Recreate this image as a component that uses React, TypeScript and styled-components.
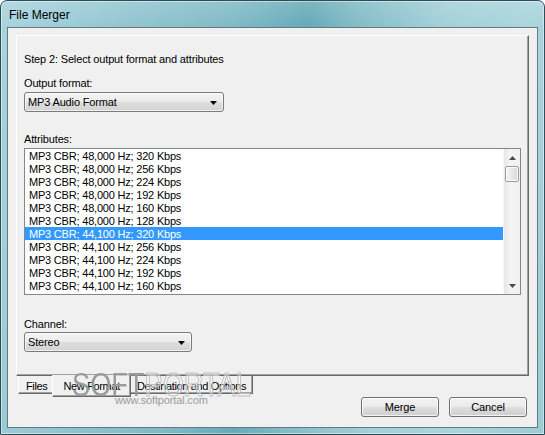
import React from "react";
import styled, { createGlobalStyle } from "styled-components";

const GlobalStyle = createGlobalStyle`
  html, body { margin: 0; padding: 0; background: #ffffff; }
  body { font-family: "Liberation Sans", Arial, sans-serif; font-size: 11px; color: #000; letter-spacing: -0.15px; }
  * { box-sizing: border-box; }
`;

const Window = styled.div`
  position: relative;
  width: 545px;
  height: 435px;
  border: 1px solid #2e4e57;
  border-radius: 7px 7px 0 0;
  overflow: hidden;
  display: flex;
  flex-direction: column;
  background:
    linear-gradient(to bottom, rgba(255, 255, 255, 0.14), rgba(255, 255, 255, 0) 26px),
    linear-gradient(100deg, #a8d4de 0%, #93c6d1 20%, #80bac6 38%, #66aab8 50%, #83bcc7 58%, #a3d0d9 72%, #aad5dc 86%, #9ccbd3 100%);
  box-shadow: inset 0 0 0 1px rgba(255, 255, 255, 0.45);
`;

const TitleBar = styled.div`
  height: 26px;
  flex: none;
  display: flex;
  align-items: center;
  padding: 1px 0 0 8px;
  font-size: 12px;
  letter-spacing: 0;
  color: #000;
`;

const Client = styled.div`
  flex: 1;
  margin: 0 6px 6px 6px;
  border: 1px solid rgba(40, 70, 80, 0.7);
  background: #f0f0f0;
  display: flex;
  flex-direction: column;
  padding: 7px 8px 10px 8px;
`;

const Panel = styled.div`
  height: 341px;
  flex: none;
  border-top: 1px solid #ffffff;
  border-left: 1px solid #ffffff;
  border-right: 1px solid #696969;
  border-bottom: 1px solid #696969;
  box-shadow: inset -1px -1px 0 #a0a0a0;
  display: flex;
  flex-direction: column;
  align-items: flex-start;
  padding: 16px 0 0 7px;
`;

const Text = styled.div<{ $top?: number }>`
  line-height: 15px;
  height: 13px;
  margin-top: ${(p) => p.$top ?? 0}px;
  white-space: nowrap;
`;

const Combo = styled.div<{ $width: number; $top?: number }>`
  width: ${(p) => p.$width}px;
  height: 20px;
  margin-top: ${(p) => p.$top ?? 0}px;
  border: 1px solid #7a7a7a;
  border-radius: 3px;
  background: linear-gradient(to bottom, #f3f3f3 0%, #ececec 48%, #dedede 52%, #d2d2d2 100%);
  box-shadow: inset 0 0 0 1px rgba(255, 255, 255, 0.7);
  display: flex;
  align-items: center;
  justify-content: space-between;
  padding: 1px 6px 0 3px;
  line-height: 13px;
`;

const ListBox = styled.div`
  width: 497px;
  height: 147px;
  margin-top: 3px;
  border: 1px solid #828790;
  background: #ffffff;
  display: flex;
`;

const Rows = styled.div`
  flex: 1;
  display: flex;
  flex-direction: column;
`;

const Row = styled.div<{ $selected?: boolean }>`
  height: 13px;
  line-height: 15px;
  padding-left: 4px;
  letter-spacing: -0.2px;
  white-space: nowrap;
  background: ${(p) => (p.$selected ? "#3399ff" : "transparent")};
  color: ${(p) => (p.$selected ? "#ffffff" : "#000000")};
`;

const ScrollBar = styled.div`
  width: 17px;
  flex: none;
  display: flex;
  flex-direction: column;
  background: linear-gradient(to right, #e6e6e6, #f4f4f4 40%, #f0f0f0);
  border-left: 1px solid #f7f7f7;
`;

const ScrollButton = styled.div`
  height: 17px;
  display: flex;
  align-items: center;
  justify-content: center;
  flex: none;
`;

const Thumb = styled.div`
  height: 16px;
  margin: 0 1px;
  border: 1px solid #9b9b9b;
  border-radius: 2px;
  background: linear-gradient(to right, #f3f3f3, #e8e8e8 50%, #d8d8d8);
  box-shadow: inset 0 0 0 1px rgba(255, 255, 255, 0.8);
  flex: none;
`;

const Track = styled.div`
  flex: 1;
`;

const TabStrip = styled.div`
  height: 21px;
  flex: none;
  display: flex;
  align-items: flex-start;
  padding-left: 2px;
`;

const Tab = styled.div<{ $selected?: boolean }>`
  position: relative;
  z-index: ${(p) => (p.$selected ? 1 : 0)};
  height: ${(p) => (p.$selected ? 22 : 18)}px;
  margin: ${(p) => (p.$selected ? "-1px -2px 0 -2px" : "0")};
  padding: ${(p) => (p.$selected ? "4px 10px 0 10px" : "3px 6px 0 7px")};
  background: #f0f0f0;
  border-left: 1px solid #ffffff;
  border-right: 1px solid #696969;
  border-bottom: 1px solid #696969;
  box-shadow: inset -1px -1px 0 #a0a0a0;
  line-height: 14px;
  letter-spacing: -0.35px;
  white-space: nowrap;
`;

const Footer = styled.div`
  height: 20px;
  flex: none;
  display: flex;
  justify-content: flex-end;
  gap: 10px;
  padding-right: 2px;
`;

const Button = styled.div`
  width: 78px;
  height: 20px;
  border: 1px solid #707070;
  border-radius: 3px;
  background: linear-gradient(to bottom, #f2f2f2 0%, #ebebeb 48%, #dddddd 52%, #cfcfcf 100%);
  box-shadow: inset 0 0 0 1px rgba(255, 255, 255, 0.75);
  display: flex;
  align-items: center;
  justify-content: center;
  padding-top: 1px;
  line-height: 13px;
`;

const Watermark = styled.div`
  position: absolute;
  left: 71px;
  top: 366px;
  font-size: 34px;
  line-height: 34px;
  letter-spacing: 0;
  white-space: nowrap;
  transform: scaleX(0.8);
  transform-origin: left top;
  pointer-events: none;
  z-index: 5;
`;

const DotLetters = styled.span`
  color: transparent;
  background-image: radial-gradient(circle, #9a9a9a 0.9px, transparent 1.1px);
  background-size: 2.5px 2px;
  -webkit-background-clip: text;
  background-clip: text;
`;

const OutlineLetters = styled.span`
  color: rgba(255, 255, 255, 0.35);
  -webkit-text-stroke: 1px #bdbdbd;
`;

const WatermarkUrl = styled.div`
  position: absolute;
  left: 114px;
  top: 393px;
  font-size: 11px;
  line-height: 13px;
  color: #9c9c9c;
  pointer-events: none;
  z-index: 5;
`;

const ComboArrow = () => (
  <svg width="7" height="4" viewBox="0 0 7 4">
    <path d="M0 0 H7 L3.5 4 Z" fill="#000" />
  </svg>
);

const ScrollArrow = ({ up }: { up?: boolean }) => (
  <svg width="7" height="4" viewBox="0 0 7 4">
    <path d={up ? "M0 4 H7 L3.5 0 Z" : "M0 0 H7 L3.5 4 Z"} fill="#4a4a4a" />
  </svg>
);

const rows = [
  "MP3 CBR; 48,000 Hz; 320 Kbps",
  "MP3 CBR; 48,000 Hz; 256 Kbps",
  "MP3 CBR; 48,000 Hz; 224 Kbps",
  "MP3 CBR; 48,000 Hz; 192 Kbps",
  "MP3 CBR; 48,000 Hz; 160 Kbps",
  "MP3 CBR; 48,000 Hz; 128 Kbps",
  "MP3 CBR; 44,100 Hz; 320 Kbps",
  "MP3 CBR; 44,100 Hz; 256 Kbps",
  "MP3 CBR; 44,100 Hz; 224 Kbps",
  "MP3 CBR; 44,100 Hz; 192 Kbps",
  "MP3 CBR; 44,100 Hz; 160 Kbps",
];

export default function App() {
  return (
    <>
      <GlobalStyle />
      <Window>
        <TitleBar>File Merger</TitleBar>
        <Client>
          <Panel>
            <Text>Step 2: Select output format and attributes</Text>
            <Text $top={11}>Output format:</Text>
            <Combo $width={200} $top={3}>
              <span>MP3 Audio Format</span>
              <ComboArrow />
            </Combo>
            <Text $top={20}>Attributes:</Text>
            <ListBox>
              <Rows>
                {rows.map((r, i) => (
                  <Row key={i} $selected={i === 6}>
                    {r}
                  </Row>
                ))}
              </Rows>
              <ScrollBar>
                <ScrollButton>
                  <ScrollArrow up />
                </ScrollButton>
                <Thumb />
                <Track />
                <ScrollButton>
                  <ScrollArrow />
                </ScrollButton>
              </ScrollBar>
            </ListBox>
            <Text $top={22}>Channel:</Text>
            <Combo $width={168} $top={2}>
              <span>Stereo</span>
              <ComboArrow />
            </Combo>
          </Panel>
          <TabStrip>
            <Tab>Files</Tab>
            <Tab $selected>New Format</Tab>
            <Tab>Destination and Options</Tab>
          </TabStrip>
          <Footer>
            <Button>Merge</Button>
            <Button>Cancel</Button>
          </Footer>
        </Client>
        <Watermark>
          <DotLetters>SOFT</DotLetters>
          <OutlineLetters>PORTAL</OutlineLetters>
        </Watermark>
        <WatermarkUrl>www.softportal.com</WatermarkUrl>
      </Window>
    </>
  );
}
